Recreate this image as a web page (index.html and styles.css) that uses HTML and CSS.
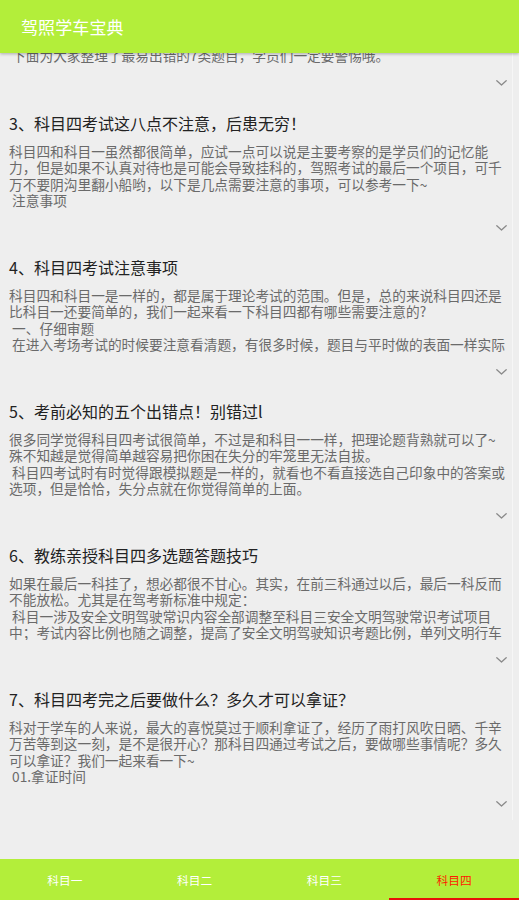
FILE: index.html
```html
<!DOCTYPE html>
<html lang="zh-CN">
<head>
<meta charset="utf-8">
<title>驾照学车宝典</title>
<link rel="stylesheet" href="styles.css">
</head>
<body>
<div class="app">
  <header class="appbar">
    <h1 class="appbar-title">驾照学车宝典</h1>
  </header>
  <main class="content">
    <div class="list">
      <article class="item-tail">
        <p class="tail-body"><span class="line"> 下面为大家整理了最易出错的7类题目，学员们一定要警惕哦。</span></p>
        <div class="item-more"><svg class="chev" width="11" height="6" viewBox="0 0 11 6"><path d="M0.8 0.8 L5.5 5 L10.2 0.8" /></svg></div>
      </article>
      <article class="item">
        <h2 class="item-title">3、科目四考试这八点不注意，后患无穷！</h2>
        <p class="item-body"><span class="line">科目四和科目一虽然都很简单，应试一点可以说是主要考察的是学员们的记忆能</span><span class="line">力，但是如果不认真对待也是可能会导致挂科的，驾照考试的最后一个项目，可千</span><span class="line">万不要阴沟里翻小船哟，以下是几点需要注意的事项，可以参考一下~</span><span class="line"> 注意事项</span></p>
        <div class="item-more"><svg class="chev" width="11" height="6" viewBox="0 0 11 6"><path d="M0.8 0.8 L5.5 5 L10.2 0.8" /></svg></div>
      </article>
      <article class="item">
        <h2 class="item-title">4、科目四考试注意事项</h2>
        <p class="item-body"><span class="line">科目四和科目一是一样的，都是属于理论考试的范围。但是，总的来说科目四还是</span><span class="line">比科目一还要简单的，我们一起来看一下科目四都有哪些需要注意的?</span><span class="line"> 一、仔细审题</span><span class="line"> 在进入考场考试的时候要注意看清题，有很多时候，题目与平时做的表面一样实际</span></p>
        <div class="item-more"><svg class="chev" width="11" height="6" viewBox="0 0 11 6"><path d="M0.8 0.8 L5.5 5 L10.2 0.8" /></svg></div>
      </article>
      <article class="item">
        <h2 class="item-title">5、考前必知的五个出错点！别错过l</h2>
        <p class="item-body"><span class="line">很多同学觉得科目四考试很简单，不过是和科目一一样，把理论题背熟就可以了~</span><span class="line">殊不知越是觉得简单越容易把你困在失分的牢笼里无法自拔。</span><span class="line"> 科目四考试时有时觉得跟模拟题是一样的，就看也不看直接选自己印象中的答案或</span><span class="line">选项，但是恰恰，失分点就在你觉得简单的上面。</span></p>
        <div class="item-more"><svg class="chev" width="11" height="6" viewBox="0 0 11 6"><path d="M0.8 0.8 L5.5 5 L10.2 0.8" /></svg></div>
      </article>
      <article class="item">
        <h2 class="item-title">6、教练亲授科目四多选题答题技巧</h2>
        <p class="item-body"><span class="line">如果在最后一科挂了，想必都很不甘心。其实，在前三科通过以后，最后一科反而</span><span class="line">不能放松。尤其是在驾考新标准中规定：</span><span class="line"> 科目一涉及安全文明驾驶常识内容全部调整至科目三安全文明驾驶常识考试项目</span><span class="line">中；考试内容比例也随之调整，提高了安全文明驾驶知识考题比例，单列文明行车</span></p>
        <div class="item-more"><svg class="chev" width="11" height="6" viewBox="0 0 11 6"><path d="M0.8 0.8 L5.5 5 L10.2 0.8" /></svg></div>
      </article>
      <article class="item">
        <h2 class="item-title">7、科目四考完之后要做什么？多久才可以拿证？</h2>
        <p class="item-body"><span class="line">科对于学车的人来说，最大的喜悦莫过于顺利拿证了，经历了雨打风吹日晒、千辛</span><span class="line">万苦等到这一刻，是不是很开心？那科目四通过考试之后，要做哪些事情呢？多久</span><span class="line">可以拿证？我们一起来看一下~</span><span class="line"> 01.拿证时间</span></p>
        <div class="item-more"><svg class="chev" width="11" height="6" viewBox="0 0 11 6"><path d="M0.8 0.8 L5.5 5 L10.2 0.8" /></svg></div>
      </article>
    </div>
  </main>
  <nav class="tabbar">
    <div class="tab">科目一</div>
    <div class="tab">科目二</div>
    <div class="tab">科目三</div>
    <div class="tab tab-active">科目四</div>
  </nav>
</div>
</body>
</html>
```

FILE: styles.css
```css
* {
  box-sizing: border-box;
}

html, body {
  margin: 0;
  padding: 0;
  background: #eeeeee;
}

body {
  font-family: "Noto Sans CJK SC", "Noto Sans", sans-serif;
}

.app {
  display: flex;
  flex-direction: column;
  width: 519px;
  height: 900px;
  overflow: hidden;
}

.appbar {
  flex: 0 0 53px;
  height: 53px;
  background: #b3ee3a;
  display: flex;
  align-items: center;
  padding-left: 21px;
  position: relative;
  z-index: 2;
  box-shadow: 0 1px 3px rgba(0, 0, 0, 0.28);
}

.appbar-title {
  margin: 0;
  font-size: 17px;
  font-weight: normal;
  color: #ffffff;
  line-height: 20px;
  letter-spacing: 0.1px;
}

.content {
  flex: 1 1 auto;
  overflow: hidden;
  background: #eeeeee;
}

.list {
  width: 513px;
  border-right: 1px solid #f6f6f6;
}

.item-tail {
  display: flow-root;
  height: 47px;
  padding: 0 5px 0 9px;
}

.tail-body {
  margin: -6px 0 0;
  font-size: 13.7px;
  line-height: 16.3px;
  color: #6a6a6a;
}

.item {
  display: flow-root;
  height: 144px;
  padding: 13px 5px 0 9px;
  overflow: hidden;
}

.item-title {
  margin: 0;
  font-size: 16px;
  line-height: 21px;
  font-weight: normal;
  color: #222222;
  white-space: nowrap;
}

.item-body {
  margin: 9px 0 0;
  height: 65.2px;
  font-size: 13.7px;
  line-height: 16.3px;
  color: #6a6a6a;
  overflow: hidden;
}

.line {
  display: block;
  white-space: pre;
}

.item-more {
  display: flex;
  justify-content: flex-end;
  align-items: center;
  height: 16px;
  margin-top: 12px;
}

.chev path {
  fill: none;
  stroke: #8a8a8a;
  stroke-width: 1.3;
  stroke-linecap: round;
  stroke-linejoin: round;
}

.tabbar {
  flex: 0 0 41px;
  height: 41px;
  display: grid;
  grid-template-columns: repeat(4, 1fr);
  background: #b3ee3a;
}

.tab {
  display: flex;
  align-items: center;
  justify-content: center;
  font-size: 11.7px;
  color: #ffffff;
  padding-top: 1px;
  border-bottom: 2px solid transparent;
}

.tab-active {
  color: #ff1a00;
  border-bottom-color: #e8100a;
}
```
